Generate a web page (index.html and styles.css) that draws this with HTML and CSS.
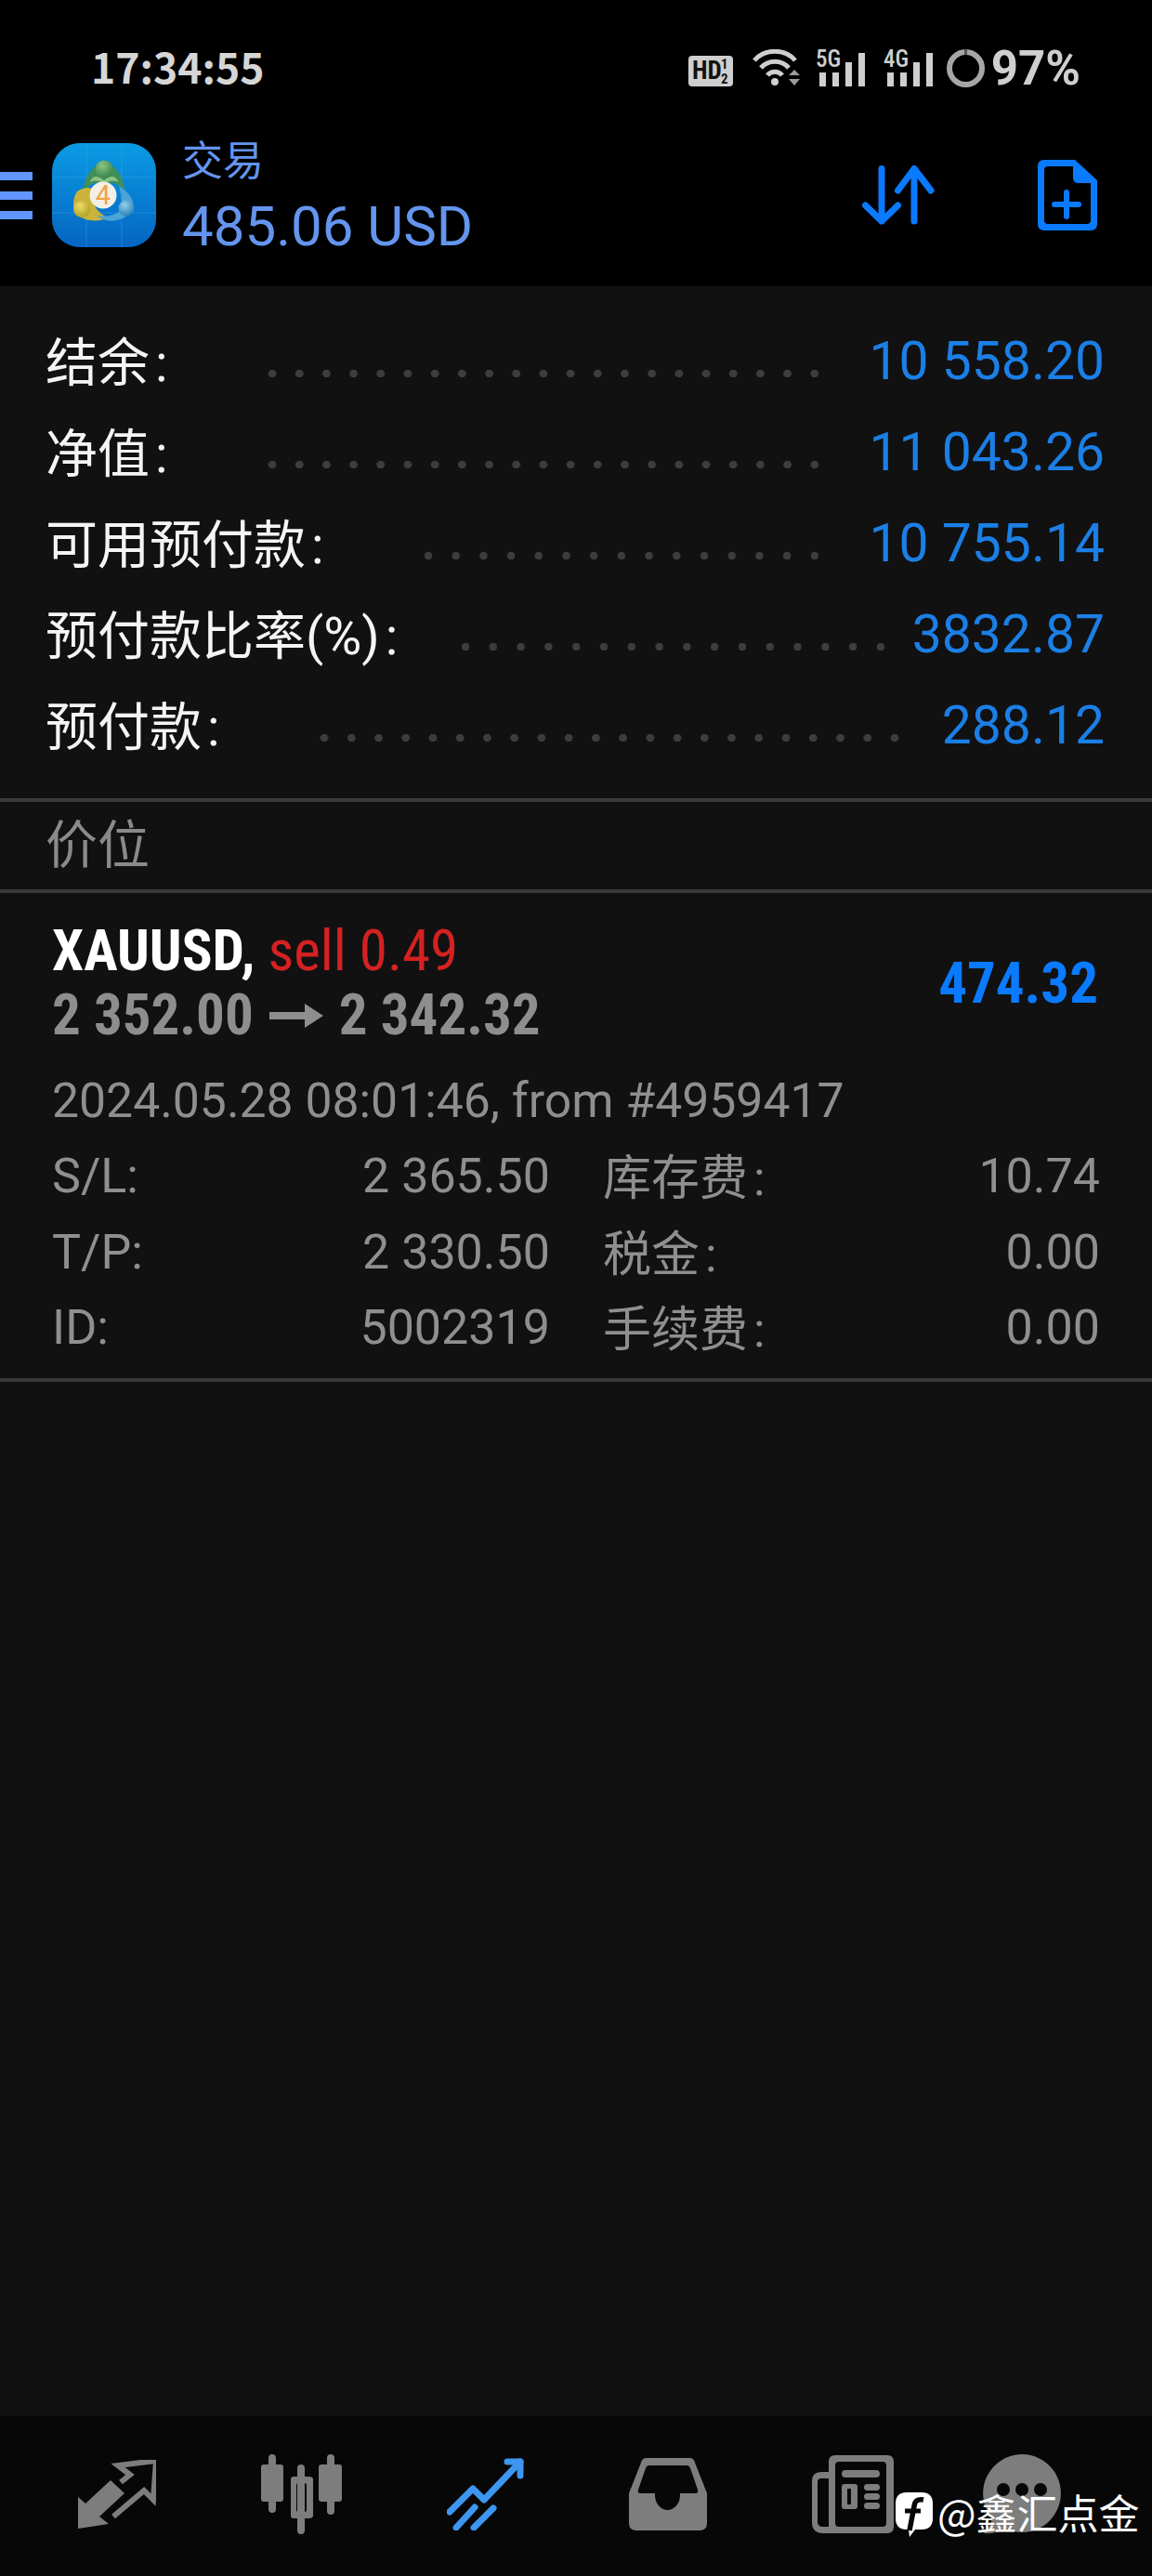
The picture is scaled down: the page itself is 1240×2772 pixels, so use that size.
FILE: index.html
```html
<!DOCTYPE html>
<html lang="zh">
<head>
    <title>交易</title>
    <meta charset="UTF-8">
    <link rel="stylesheet" href="styles.css">
</head>
<body>
    <header class="top">
        <div class="status">
            <span class="time">17:34:55</span>
            <div class="status-icons">
                <svg class="ic-hd" width="48" height="33" viewBox="0 0 48 33">
                    <rect width="48" height="33" rx="4" fill="#cfcfcf"/>
                    <text x="4" y="25" class="hd-text">HD</text>
                    <text x="35" y="14" class="hd-small">1</text>
                    <text x="35" y="30" class="hd-small">2</text>
                </svg>
                <svg width="52" height="40" viewBox="0 0 52 40" fill="none" stroke="#cfcfcf" stroke-width="5">
                    <path d="M2 12C13 -1 35 -1 46 12"/>
                    <path d="M9 20C17 11 31 11 39 20"/>
                    <path d="M16 28C20 23 28 23 32 28"/>
                    <circle cx="24" cy="35" r="4" fill="#cfcfcf" stroke="none"/>
                    <path d="M39 28h12l-6-6zM39 32h12l-6 7z" fill="#9a9a9a" stroke="none"/>
                </svg>
                <svg width="54" height="50" viewBox="0 -5 54 50">
                    <text x="0" y="19" class="net-text">5G</text>
                    <path d="M4 25h7v15H4zM18 25h7v15h-7zM32 14h7v26h-7zM46 4h7v36h-7z" fill="#cfcfcf"/>
                </svg>
                <svg width="54" height="50" viewBox="0 -5 54 50">
                    <text x="0" y="19" class="net-text">4G</text>
                    <path d="M4 25h7v15H4zM18 25h7v15h-7zM32 14h7v26h-7zM46 4h7v36h-7z" fill="#cfcfcf"/>
                </svg>
                <svg width="41" height="41" viewBox="0 0 41 41" fill="none">
                    <circle cx="20.5" cy="20.5" r="17.5" stroke="#a6a6a6" stroke-width="6"/>
                    <path d="M20.5 0v6" stroke="#555" stroke-width="3"/>
                </svg>
                <span class="battery">97%</span>
            </div>
        </div>
        <div class="appbar">
            <div class="burger"><i></i><i></i><i></i></div>
            <svg class="logo" width="112" height="112" viewBox="0 0 112 112">
                <defs>
                    <linearGradient id="logoBg" x1="0" y1="0" x2="0" y2="1">
                        <stop offset="0" stop-color="#0a9be4"/>
                        <stop offset="1" stop-color="#0565c2"/>
                    </linearGradient>
                    <radialGradient id="ballG" cx=".4" cy=".3" r=".8">
                        <stop offset="0" stop-color="#8cc483"/>
                        <stop offset="1" stop-color="#2f7d45"/>
                    </radialGradient>
                    <radialGradient id="ballY" cx=".4" cy=".3" r=".8">
                        <stop offset="0" stop-color="#efdc68"/>
                        <stop offset="1" stop-color="#a8981f"/>
                    </radialGradient>
                    <radialGradient id="ballB" cx=".4" cy=".3" r=".8">
                        <stop offset="0" stop-color="#8fd0ea"/>
                        <stop offset="1" stop-color="#1d78b0"/>
                    </radialGradient>
                </defs>
                <rect width="112" height="112" rx="30" fill="url(#logoBg)"/>
                <path d="M37 0v112M75 0v112M0 37h112M0 75h112" stroke="#4db4ea" stroke-opacity=".35"/>
                <path d="M34 52C34 36 44 24 56 19C68 24 78 36 78 52C70 42 62 40 56 46C50 40 42 42 34 52Z" fill="#3f9058"/>
                <path d="M41 42C43 35 48 34 56 40C64 34 69 35 71 42C65 39 60 41 56 44C52 41 47 39 41 42Z" fill="#8cc483"/>
                <circle cx="56" cy="28" r="9.5" fill="url(#ballG)"/>
                <path d="M27 52C36 46 42 48 46 50C40 60 46 74 60 80C50 86 34 84 26 76C22 68 22 60 27 52Z" fill="#c9b33a"/>
                <circle cx="32" cy="71" r="9" fill="url(#ballY)"/>
                <path d="M72 46C82 52 90 62 87 72C78 84 60 88 48 78C58 80 68 78 74 72C76 62 74 54 72 46Z" fill="#4ba3d6"/>
                <circle cx="80" cy="70" r="8.5" fill="url(#ballB)"/>
                <circle cx="55" cy="56" r="14.5" fill="#f3efe8"/>
                <text x="55" y="66" class="logo-four">4</text>
            </svg>
            <div class="account">
                <span class="account-name">交易</span>
                <span class="account-sum">485.06 USD</span>
            </div>
            <svg class="act-arrows" width="78" height="64" viewBox="0 0 78 64" fill="none" stroke="#0a7aff" stroke-width="7" stroke-linecap="round" stroke-linejoin="round">
                <path d="M21 3.5V60M3.5 43L21 60L38.5 43"/>
                <path d="M56 60V3.5M38.5 27L56 3.5L74 27"/>
            </svg>
            <svg class="act-doc" width="64" height="76" viewBox="0 0 64 76">
                <path fill-rule="evenodd" fill="#0a7aff" d="M7 0H40L64 22V69Q64 76 57 76H7Q0 76 0 69V7Q0 0 7 0ZM11 7Q7 7 7 11V65Q7 69 11 69H53Q57 69 57 65V25H44Q38 25 38 19V7Z"/>
                <path d="M31 35V61M18 48H44" stroke="#0a7aff" stroke-width="6" stroke-linecap="round"/>
            </svg>
        </div>
    </header>

    <main class="content">
        <section class="summary">
            <div class="sum-row"><span class="sum-label">结余<i>:</i></span><span class="dots"></span><span class="sum-value">10 558.20</span></div>
            <div class="sum-row"><span class="sum-label">净值<i>:</i></span><span class="dots"></span><span class="sum-value">11 043.26</span></div>
            <div class="sum-row"><span class="sum-label">可用预付款<i>:</i></span><span class="dots"></span><span class="sum-value">10 755.14</span></div>
            <div class="sum-row"><span class="sum-label">预付款比率(%)<i>:</i></span><span class="dots"></span><span class="sum-value">3832.87</span></div>
            <div class="sum-row"><span class="sum-label">预付款<i>:</i></span><span class="dots"></span><span class="sum-value">288.12</span></div>
        </section>
        <div class="section-head">价位</div>
        <section class="position">
            <div class="pos-top">
                <div class="pos-title">
                    <div class="pos-line"><b class="symbol">XAUUSD,</b> <span class="side">sell 0.49</span></div>
                    <div class="pos-line pos-prices">2 352.00 <svg class="price-arrow" width="58" height="26" viewBox="0 0 58 26"><path d="M0 9h38V0l20 13L38 26V17H0z" fill="#8e8e90"/></svg> 2 342.32</div>
                </div>
                <div class="pos-profit">474.32</div>
            </div>
            <div class="pos-date">2024.05.28 08:01:46, from #4959417</div>
            <div class="pos-grid">
                <div class="pos-cell"><span>S/L:</span><span>2 365.50</span></div>
                <div class="pos-cell"><span class="cn">库存费<i>:</i></span><span>10.74</span></div>
                <div class="pos-cell"><span>T/P:</span><span>2 330.50</span></div>
                <div class="pos-cell"><span class="cn">税金<i>:</i></span><span>0.00</span></div>
                <div class="pos-cell"><span>ID:</span><span>5002319</span></div>
                <div class="pos-cell"><span class="cn">手续费<i>:</i></span><span>0.00</span></div>
            </div>
        </section>
    </main>

    <nav class="nav">
        <svg width="84" height="74" viewBox="0 0 84 74">
            <path d="M0 74V40L8 47L35 22L50 36L23 61L33 69Z" fill="#7d7d7d"/>
            <path d="M46 24L56 16L43 6L84 1L81 43L71 33L38 61" fill="none" stroke="#7d7d7d" stroke-width="6"/>
        </svg>
        <svg width="87" height="86" viewBox="0 0 87 86">
            <path d="M12 4V59M43 15V82M75 4V61" stroke="#7d7d7d" stroke-width="8" stroke-linecap="round"/>
            <rect x="0" y="11" width="24" height="40" rx="3" fill="#7d7d7d"/>
            <rect x="62" y="11" width="25" height="40" rx="3" fill="#7d7d7d"/>
            <path fill-rule="evenodd" fill="#7d7d7d" d="M35 24H51Q56 24 56 27V66Q56 69 51 69H35Q32 69 32 66V27Q32 24 35 24ZM40 31Q38 31 38 33V60Q38 62 40 62H47Q49 62 49 60V33Q49 31 47 31Z"/>
        </svg>
        <svg width="83" height="78" viewBox="0 0 83 78" fill="none" stroke="#3d96f0" stroke-width="7" stroke-linecap="round" stroke-linejoin="round">
            <path d="M3 58L28 33L40 45L79 4"/>
            <path d="M65 4H79V19"/>
            <path d="M30 53L10 75M50 54L29 75"/>
        </svg>
        <svg width="84" height="78" viewBox="0 0 84 78">
            <path fill-rule="evenodd" fill="#7d7d7d" d="M19 0H65Q70 0 71 5L84 38V70Q84 78 76 78H8Q0 78 0 70V38L13 5Q14 0 19 0ZM22 8Q19 8 18 11L10 34Q9 38 12 38H28V40A13.5 16 0 0 0 55 40V38H72Q75 38 74 34L66 11Q65 8 62 8Z"/>
        </svg>
        <svg width="88" height="84" viewBox="0 0 88 84">
            <path fill-rule="evenodd" fill="#7d7d7d" d="M25 0H81Q88 0 88 7V77Q88 84 81 84H12Q0 84 0 72V28Q0 18 10 18H18V7Q18 0 25 0ZM29 7Q25 7 25 11V73Q25 77 29 77H76Q80 77 80 73V11Q80 7 76 7ZM10 25Q6 25 6 29V72Q6 77 12 77H18V25Z"/>
            <rect x="32" y="16" width="41" height="8" rx="4" fill="#7d7d7d"/>
            <path fill-rule="evenodd" fill="#7d7d7d" d="M35 31H46Q49 31 49 34V55Q49 58 46 58H35Q32 58 32 55V34Q32 31 35 31ZM38 36V53H42V36Z"/>
            <rect x="56" y="31" width="17" height="7" rx="3.5" fill="#7d7d7d"/>
            <rect x="56" y="41" width="17" height="7" rx="3.5" fill="#7d7d7d"/>
            <rect x="56" y="51" width="17" height="7" rx="3.5" fill="#7d7d7d"/>
        </svg>
        <svg class="nav-chat" width="84" height="86" viewBox="0 0 84 86">
            <path d="M42 0A42 42 0 1 1 24 80Q14 86 1 85Q9 76 10 69A42 42 0 0 1 42 0Z" fill="#7d7d7d"/>
            <circle cx="22" cy="38" r="7" fill="#070707"/>
            <circle cx="42" cy="38" r="7" fill="#070707"/>
            <circle cx="62" cy="38" r="7" fill="#070707"/>
        </svg>
        <div class="mark">
            <svg width="40" height="48" viewBox="0 0 40 48">
                <path d="M12 0H28Q40 0 40 12V28Q40 40 28 40H21L15 48L14 40H12Q0 40 0 28V12Q0 0 12 0Z" fill="#fff"/>
                <path d="M30 8Q21 6 20 15L15 41" fill="none" stroke="#070707" stroke-width="5.5"/>
                <path d="M10 20H27" stroke="#070707" stroke-width="5"/>
            </svg>
            <span>@鑫汇点金</span>
        </div>
    </nav>
</body>
</html>
```

FILE: styles.css
```css
* {
    box-sizing: border-box;
}
body {
    margin: 0;
    width: 1240px;
    height: 2772px;
    display: flex;
    flex-direction: column;
    background-color: #111112;
    font-family: Roboto, "Noto Sans CJK SC", sans-serif;
    overflow: hidden;
}
i {
    font-style: normal;
}

/* top bars */
.top {
    height: 308px;
    background-color: #000;
}
.status {
    height: 146px;
    display: flex;
    align-items: center;
    justify-content: space-between;
    padding: 0 77px 0 98px;
}
.time {
    margin-bottom: 5px;
    font-family: "Noto Sans CJK SC", sans-serif;
    font-size: 44.5px;
    font-weight: 700;
    color: #d6d6d6;
}
.status-icons {
    display: flex;
    align-items: center;
}
.status-icons svg {
    display: block;
    margin-right: 16px;
}
.status-icons svg:nth-child(1) {
    margin-top: 6px;
    margin-right: 21px;
}
.status-icons svg:nth-child(3) {
    margin-right: 19px;
}
.status-icons svg:nth-child(4) {
    margin-right: 14px;
}
.status-icons svg:nth-child(5) {
    margin-right: 7px;
}
.hd-text {
    font-family: Roboto, sans-serif;
    font-size: 27px;
    font-weight: 700;
    font-stretch: 75%;
    fill: #111;
}
.hd-small {
    font-family: Roboto, sans-serif;
    font-size: 15px;
    font-weight: 700;
    font-stretch: 75%;
    fill: #111;
}
.net-text {
    font-family: Roboto, sans-serif;
    font-size: 25px;
    font-weight: 500;
    font-stretch: 75%;
    fill: #cfcfcf;
}
.battery {
    font-family: Roboto, sans-serif;
    font-size: 51px;
    font-weight: 700;
    color: #cfcfcf;
    white-space: nowrap;
}
.appbar {
    height: 162px;
    padding: 0 59px 34px 0;
    display: flex;
    align-items: center;
}
.burger {
    width: 35px;
    margin-right: 21px;
    display: flex;
    flex-direction: column;
    gap: 12px;
}
.burger i {
    display: block;
    height: 9px;
    background-color: #6195ff;
}
.logo {
    margin-right: 28px;
}
.logo-four {
    font-family: Roboto, sans-serif;
    font-size: 29px;
    fill: #f0a24a;
    text-anchor: middle;
}
.account {
    padding-top: 9px;
    display: flex;
    flex-direction: column;
    color: #6495ee;
}
.account-name {
    font-family: "Noto Sans CJK SC", sans-serif;
    font-size: 44px;
    line-height: 50px;
}
.account-sum {
    margin-top: 9px;
    font-size: 60px;
    line-height: 80px;
    white-space: nowrap;
}
.act-arrows {
    margin-left: auto;
    margin-right: 111px;
}

/* account summary */
.content {
    flex: 1;
}
.summary {
    padding: 31px 51px 30px 49px;
}
.sum-row {
    height: 98px;
    display: flex;
    align-items: center;
}
.sum-label {
    margin-bottom: 6px;
    font-size: 56px;
    color: #f4f4f4;
    white-space: nowrap;
}
.sum-label i {
    margin-left: 6px;
}
.dots {
    flex: 1;
    height: 8px;
    margin: 28px 45px 0 98px;
    background-image: radial-gradient(circle, #3d3d3d 4px, transparent 4.5px);
    background-size: 28px 8px;
    background-repeat: space no-repeat;
}
.sum-row:nth-child(4) .dots {
    margin-left: 59px;
    margin-right: 20px;
}
.sum-row:nth-child(5) .dots {
    margin-right: 37px;
}
.sum-value {
    font-size: 57px;
    color: #1b7fe6;
    white-space: nowrap;
}
.section-head {
    height: 102px;
    padding: 0 0 12px 49px;
    display: flex;
    align-items: center;
    font-family: "Noto Sans CJK SC", sans-serif;
    font-size: 56px;
    color: #8a8a8a;
    border-top: 4px solid #3a3a3a;
    border-bottom: 4px solid #3a3a3a;
}

/* open position */
.position {
    padding: 28px 58px 13px 56px;
    border-bottom: 4px solid #3a3a3a;
}
.pos-top {
    display: flex;
    align-items: center;
    justify-content: space-between;
}
.pos-line {
    height: 69px;
    line-height: 69px;
    font-size: 61px;
    font-stretch: 75%;
    white-space: nowrap;
}
.symbol {
    font-weight: 700;
    color: #fff;
}
.side {
    font-weight: 400;
    color: #d42121;
}
.pos-prices {
    font-weight: 700;
    color: #8e8e90;
}
.price-arrow {
    margin: 0 3px;
    vertical-align: 7px;
}
.pos-profit {
    font-size: 61px;
    font-weight: 700;
    font-stretch: 75%;
    color: #0a7aff;
}
.pos-date {
    margin-top: 29px;
    line-height: 58px;
    font-size: 51.7px;
    color: #8f8f8f;
    white-space: nowrap;
}
.pos-grid {
    margin-top: 11px;
    display: grid;
    grid-template-columns: 536px 535px;
    grid-auto-rows: 81.5px;
    column-gap: 57px;
    color: #8f8f8f;
    font-size: 52px;
}
.pos-cell {
    display: flex;
    align-items: center;
    justify-content: space-between;
    white-space: nowrap;
}
.pos-cell .cn {
    margin-bottom: 4px;
}
.pos-cell i {
    margin-left: 6px;
}

/* bottom nav */
.nav {
    position: relative;
    height: 172px;
    padding: 0 0 4px 84px;
    display: flex;
    align-items: center;
    gap: 113px;
    background-color: #070707;
}
.nav-chat {
    margin-left: -17px;
}
.mark {
    position: absolute;
    left: 964px;
    top: 76px;
    display: flex;
    align-items: flex-start;
    gap: 5px;
    font-family: "Noto Sans CJK SC", sans-serif;
    font-size: 44px;
    line-height: 54px;
    color: #fff;
    white-space: nowrap;
}
.mark svg {
    margin-top: 6px;
}
```
